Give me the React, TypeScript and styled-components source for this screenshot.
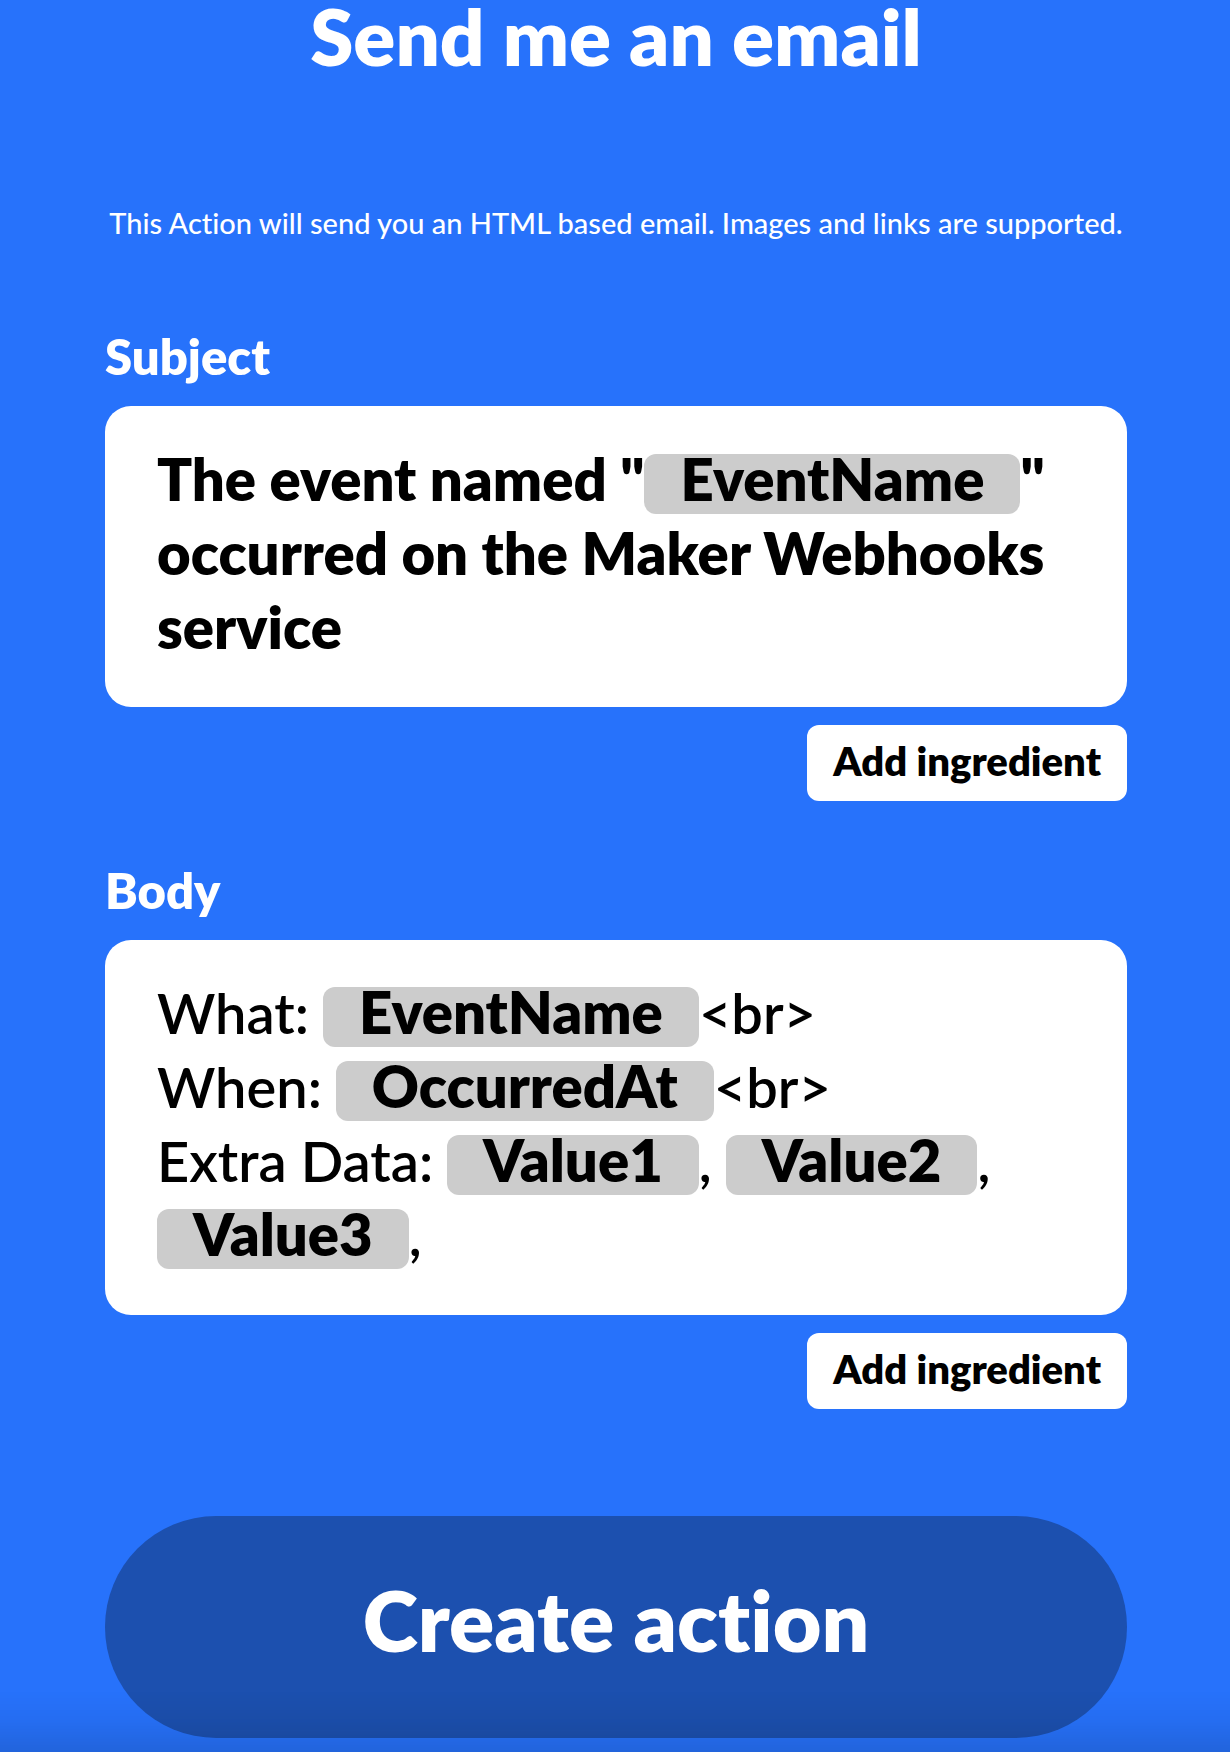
import React from "react";
import styled, { createGlobalStyle } from "styled-components";

const GlobalStyle = createGlobalStyle`
  *, *::before, *::after {
    box-sizing: border-box;
  }
  body {
    margin: 0;
    background: #2772fb;
    color: #fff;
    font-family: Lato, "Open Sans", sans-serif;
    font-weight: 800;
    font-variant-ligatures: none;
  }
`;

const Page = styled.main`
  display: flex;
  flex-direction: column;
  padding: 0 103px 14px 105px;
`;

const Title = styled.h1`
  margin: 0;
  font-size: 78px;
  font-weight: 800;
  line-height: 72px;
  text-align: center;
`;

const Description = styled.p`
  margin: 130px 0 0;
  font-size: 29px;
  font-weight: 500;
  line-height: 42px;
  text-align: center;
`;

const Form = styled.form`
  display: flex;
  flex-direction: column;
  gap: 57px;
  margin-top: 80px;
`;

const Field = styled.div`
  display: flex;
  flex-direction: column;
`;

const Label = styled.label`
  margin-bottom: 18px;
  font-size: 49px;
  line-height: 64px;
`;

const Editor = styled.div<{ $bold?: boolean }>`
  padding: 36px 52px 43px;
  border-radius: 26px;
  outline: none;
  background: #fff;
  color: #000;
  font-size: ${(p) => (p.$bold ? 58 : 56)}px;
  font-weight: ${(p) => (p.$bold ? 800 : 600)};
  line-height: 74px;
`;

const Chip = styled.span`
  display: inline-block;
  padding: 0 36px 10px;
  border-radius: 12px;
  background: #ccc;
  font-size: 58px;
  font-weight: 800;
  line-height: 50px;
`;

const AddButton = styled.button`
  align-self: flex-end;
  margin-top: 18px;
  padding: 12px 26px 16px;
  border: 0;
  border-radius: 12px;
  background: #fff;
  color: #000;
  font: inherit;
  font-size: 40px;
  line-height: 48px;
  cursor: pointer;
`;

const CreateButton = styled.button`
  margin-top: 50px;
  padding: 54px 40px 68px;
  border: 0;
  border-radius: 111px;
  background: #1c50af;
  color: #fff;
  font: inherit;
  font-size: 84px;
  line-height: 100px;
  cursor: pointer;
`;

const BottomShade = styled.div`
  position: fixed;
  right: 0;
  bottom: 0;
  left: 0;
  height: 62px;
  background: linear-gradient(rgba(0, 0, 0, 0), rgba(0, 0, 0, 0.04) 50%, rgba(0, 0, 0, 0.12));
  pointer-events: none;
`;

type FieldProps = {
  id: string;
  label: string;
  bold?: boolean;
  children: React.ReactNode;
};

function IngredientField({ id, label, bold, children }: FieldProps) {
  return (
    <Field>
      <Label id={`${id}-label`}>{label}</Label>
      <Editor
        id={id}
        role="textbox"
        aria-multiline="true"
        aria-labelledby={`${id}-label`}
        contentEditable
        suppressContentEditableWarning
        spellCheck={false}
        $bold={bold}
      >
        {children}
      </Editor>
      <AddButton type="button">Add ingredient</AddButton>
    </Field>
  );
}

export default function App() {
  return (
    <>
      <GlobalStyle />
      <Page>
        <Title>Send me an email</Title>
        <Description>
          This Action will send you an HTML based email. Images and links are supported.
        </Description>
        <Form onSubmit={(event) => event.preventDefault()}>
          <IngredientField id="subject" label="Subject" bold>
            The event named "<Chip>EventName</Chip>" occurred on the Maker Webhooks service
          </IngredientField>
          <IngredientField id="body" label="Body">
            What: <Chip>EventName</Chip>{"<br>"}
            <br />
            When: <Chip>OccurredAt</Chip>{"<br>"}
            <br />
            Extra Data: <Chip>Value1</Chip>, <Chip>Value2</Chip>, <Chip>Value3</Chip>,
          </IngredientField>
          <CreateButton type="submit">Create action</CreateButton>
        </Form>
      </Page>
      <BottomShade />
    </>
  );
}
